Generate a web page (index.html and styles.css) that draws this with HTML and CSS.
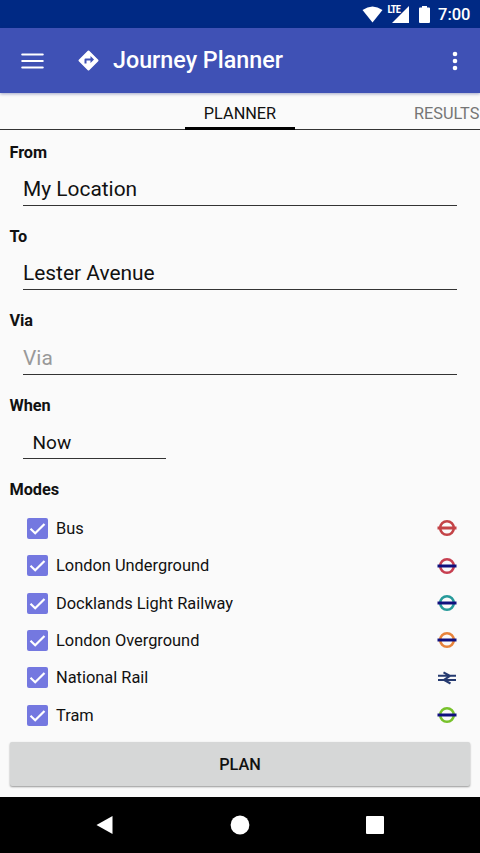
FILE: index.html
```html
<!DOCTYPE html>
<html lang="en">
<head>
<meta charset="utf-8">
<title>Journey Planner</title>
<link rel="stylesheet" href="styles.css">
</head>
<body>
<div class="status">
  <svg class="wifi" width="21" height="17" viewBox="0 0 21 17"><path d="M10.5 16.5 0.5 4Q10.5-3 20.5 4Z" fill="#fff"/></svg>
  <span class="lte">LTE</span>
  <svg class="signal" width="17" height="17" viewBox="0 0 17 17"><path d="M17 0V17H0Z" fill="#fff"/></svg>
  <svg class="battery" width="11" height="17" viewBox="0 0 11 17"><path d="M3 0H8V1.500H10Q11 1.500 11 2.500V16Q11 17 10 17H1Q0 17 0 16V2.500Q0 1.500 1 1.500H3Z" fill="#fff"/></svg>
  <span class="clock">7:00</span>
</div>
<header class="appbar">
  <svg class="menu" width="23" height="16" viewBox="0 0 23 16"><path d="M1.300 1.500H21.700M1.300 8H21.700M1.300 14.500H21.700" stroke="#fff" stroke-width="2.200" stroke-linecap="round"/></svg>
  <svg class="directions" width="21" height="21" viewBox="1.5 1.5 21 21"><path d="M21.71 11.29l-9-9a1 1 0 0 0-1.41 0l-9 9a1 1 0 0 0 0 1.41l9 9a1 1 0 0 0 1.41 0l9-9a1 1 0 0 0 0-1.41zM14 14.5V12h-4v3H8v-4a1 1 0 0 1 1-1h5V7.500l3.500 3.500-3.500 3.500z" fill="#fff"/></svg>
  <h1>Journey Planner</h1>
  <svg class="more" width="6" height="20" viewBox="0 0 6 20"><g fill="#fff"><circle cx="3" cy="3" r="2.300"/><circle cx="3" cy="10" r="2.300"/><circle cx="3" cy="17" r="2.300"/></g></svg>
</header>
<nav class="tabs">
  <span class="tab active">PLANNER</span>
  <span class="tab next">RESULTS</span>
</nav>
<main>
  <section class="field"><h2>From</h2><div class="input">My Location</div></section>
  <section class="field"><h2>To</h2><div class="input">Lester Avenue</div></section>
  <section class="field"><h2>Via</h2><div class="input hint">Via</div></section>
  <section class="field"><h2>When</h2><div class="input when">Now</div></section>
  <h2>Modes</h2>
  <ul class="modes">
    <li><svg class="check" viewBox="0 0 21 21"><rect width="21" height="21" rx="2"/><path d="M3.500 10.800 8.200 15.300 17.500 6"/></svg><span>Bus</span><svg class="roundel bus" viewBox="0 0 20 18"><circle cx="10" cy="9" r="6.800"/><path d="M0.500 9H19.500"/></svg></li>
    <li><svg class="check" viewBox="0 0 21 21"><rect width="21" height="21" rx="2"/><path d="M3.500 10.800 8.200 15.300 17.500 6"/></svg><span>London Underground</span><svg class="roundel tube" viewBox="0 0 20 18"><circle cx="10" cy="9" r="6.800"/><path d="M0.500 9H19.500"/></svg></li>
    <li><svg class="check" viewBox="0 0 21 21"><rect width="21" height="21" rx="2"/><path d="M3.500 10.800 8.200 15.300 17.500 6"/></svg><span>Docklands Light Railway</span><svg class="roundel dlr" viewBox="0 0 20 18"><circle cx="10" cy="9" r="6.800"/><path d="M0.500 9H19.500"/></svg></li>
    <li><svg class="check" viewBox="0 0 21 21"><rect width="21" height="21" rx="2"/><path d="M3.500 10.800 8.200 15.300 17.500 6"/></svg><span>London Overground</span><svg class="roundel overground" viewBox="0 0 20 18"><circle cx="10" cy="9" r="6.800"/><path d="M0.500 9H19.500"/></svg></li>
    <li><svg class="check" viewBox="0 0 21 21"><rect width="21" height="21" rx="2"/><path d="M3.500 10.800 8.200 15.300 17.500 6"/></svg><span>National Rail</span><svg class="rail" viewBox="0 0 20 18"><path d="M1 6.800H19M1 11H19M6.500 3.300 13 6.800 7 11 13.500 14.500"/></svg></li>
    <li><svg class="check" viewBox="0 0 21 21"><rect width="21" height="21" rx="2"/><path d="M3.500 10.800 8.200 15.300 17.500 6"/></svg><span>Tram</span><svg class="roundel tram" viewBox="0 0 20 18"><circle cx="10" cy="9" r="6.800"/><path d="M0.500 9H19.500"/></svg></li>
  </ul>
  <button class="plan">PLAN</button>
</main>
<footer class="navbar">
  <svg width="20" height="20" viewBox="0 0 20 20"><path d="M1.500 10 17.500 1V19Z"/></svg>
  <svg width="20" height="20" viewBox="0 0 20 20"><circle cx="10" cy="10" r="9.400"/></svg>
  <svg width="20" height="20" viewBox="0 0 20 20"><rect x="1" y="1" width="18" height="18" rx="1"/></svg>
</footer>
</body>
</html>
```
FILE: styles.css
```css
* { box-sizing: border-box; }
body {
  margin: 0;
  width: 480px;
  height: 853px;
  display: flex;
  flex-direction: column;
  overflow: hidden;
  background: #fafafa;
  color: #111;
  font-family: Roboto, "Liberation Sans", sans-serif;
}
svg { display: block; flex: none; fill: none; }
.status {
  flex: none;
  height: 28px;
  display: flex;
  align-items: center;
  justify-content: flex-end;
  padding-right: 9.5px;
  background: #002984;
  color: #fff;
}
.lte { align-self: flex-start; margin: 4px -8px 0 5px; font: 700 10.5px/11px "Roboto Condensed", Roboto, sans-serif; letter-spacing: -0.8px; }
.battery { margin: 0 8px 0 10px; }
.clock { font-size: 16.5px; font-weight: 500; line-height: 20px; padding-top: 2px; }
.appbar {
  flex: none;
  height: 65px;
  display: flex;
  align-items: center;
  padding: 0 22.5px 0 21px;
  background: #3f51b5;
  color: #fff;
  box-shadow: 0 1px 3px rgba(30, 40, 120, 0.4);
  z-index: 1;
}
.directions { margin-left: 34px; }
h1 { margin: -1px auto 0 14px; font-size: 23.3px; font-weight: 500; line-height: 28px; }
.tabs {
  flex: none;
  height: 37px;
  display: grid;
  grid-template-columns: 185px 110px 119px 1fr;
  border-bottom: 1px solid #333;
}
.tab { font-size: 16.3px; line-height: 41px; height: 37px; white-space: nowrap; }
.active { grid-column: 2; text-align: center; border-bottom: 3px solid #000; }
.next { grid-column: 4; color: #757575; }
main { flex: none; height: 667px; padding: 12.7px 10px 0; }
h2 { margin: 0 0 0 -0.6px; font-size: 16.3px; font-weight: 700; line-height: 20px; }
.field { height: 84.4px; }
.input {
  height: 43.3px;
  margin: 0 13px;
  padding-top: 14.3px;
  border-bottom: 1px solid #333;
  font-size: 20.9px;
  line-height: 25px;
}
.hint { color: #999; }
.when { width: 143px; padding: 13.7px 0 0 9.5px; font-size: 19px; }
.modes { margin: 9.4px 0 0; padding: 0 13px 0 17px; list-style: none; }
.modes li { display: flex; align-items: center; height: 37.350px; font-size: 16.4px; }
.modes span { flex: 1; }
.check { width: 21px; height: 21px; margin-right: 8px; }
.check rect { fill: #7478e0; }
.check path { stroke: #fff; stroke-width: 2.2; }
.roundel, .rail { width: 20px; height: 18px; }
.roundel circle { stroke-width: 2.6; }
.roundel path { stroke: #10107e; stroke-width: 3; }
.bus circle, .bus path { stroke: #c44347; }
.tube circle { stroke: #c73f50; }
.dlr circle { stroke: #269a9a; }
.overground circle { stroke: #e8833a; }
.tram circle { stroke: #77c22b; }
.rail path { stroke: #253a70; stroke-width: 2.1; }
.plan {
  display: block;
  width: 460px;
  height: 44px;
  margin-top: 8.5px;
  padding: 1px 0 0;
  border: 0;
  border-radius: 2px;
  background: #d6d7d7;
  color: #111;
  box-shadow: 0 1px 2px rgba(0, 0, 0, 0.4);
  font: 500 16.3px/44px Roboto, sans-serif;
}
.navbar {
  flex: none;
  height: 56px;
  display: flex;
  align-items: center;
  justify-content: center;
  gap: 115px;
  background: #000;
}
.navbar svg { fill: #fff; }
```
